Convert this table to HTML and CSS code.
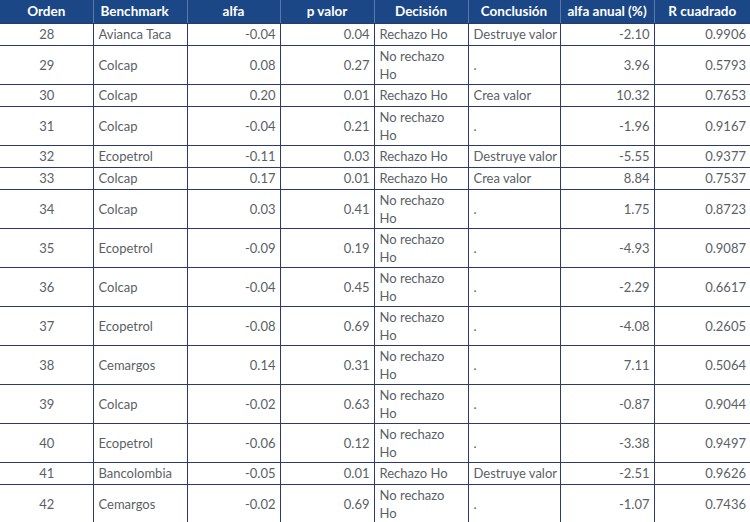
FILE: index.html
```html
<!DOCTYPE html>
<html lang="es">
<head>
<meta charset="utf-8">
<title>Tabla</title>
<link rel="stylesheet" href="styles.css">
</head>
<body>
<table class="tbl">
<colgroup>
<col class="c1"><col class="c2"><col class="c3"><col class="c4"><col class="c5"><col class="c6"><col class="c7"><col class="c8">
</colgroup>
<thead>
<tr><th>Orden</th><th class="th-left">Benchmark</th><th>alfa</th><th>p valor</th><th>Decisión</th><th>Conclusión</th><th>alfa anual (%)</th><th>R cuadrado</th></tr>
</thead>
<tbody>
<tr class="r1"><td class="c">28</td><td>Avianca Taca</td><td class="n">-0.04</td><td class="n">0.04</td><td>Rechazo Ho</td><td>Destruye valor</td><td class="n">-2.10</td><td class="n">0.9906</td></tr>
<tr class="r2"><td class="c">29</td><td>Colcap</td><td class="n">0.08</td><td class="n">0.27</td><td>No rechazo<br>Ho</td><td>.</td><td class="n">3.96</td><td class="n">0.5793</td></tr>
<tr class="r1"><td class="c">30</td><td>Colcap</td><td class="n">0.20</td><td class="n">0.01</td><td>Rechazo Ho</td><td>Crea valor</td><td class="n">10.32</td><td class="n">0.7653</td></tr>
<tr class="r2"><td class="c">31</td><td>Colcap</td><td class="n">-0.04</td><td class="n">0.21</td><td>No rechazo<br>Ho</td><td>.</td><td class="n">-1.96</td><td class="n">0.9167</td></tr>
<tr class="r1"><td class="c">32</td><td>Ecopetrol</td><td class="n">-0.11</td><td class="n">0.03</td><td>Rechazo Ho</td><td>Destruye valor</td><td class="n">-5.55</td><td class="n">0.9377</td></tr>
<tr class="r1"><td class="c">33</td><td>Colcap</td><td class="n">0.17</td><td class="n">0.01</td><td>Rechazo Ho</td><td>Crea valor</td><td class="n">8.84</td><td class="n">0.7537</td></tr>
<tr class="r2"><td class="c">34</td><td>Colcap</td><td class="n">0.03</td><td class="n">0.41</td><td>No rechazo<br>Ho</td><td>.</td><td class="n">1.75</td><td class="n">0.8723</td></tr>
<tr class="r2"><td class="c">35</td><td>Ecopetrol</td><td class="n">-0.09</td><td class="n">0.19</td><td>No rechazo<br>Ho</td><td>.</td><td class="n">-4.93</td><td class="n">0.9087</td></tr>
<tr class="r2"><td class="c">36</td><td>Colcap</td><td class="n">-0.04</td><td class="n">0.45</td><td>No rechazo<br>Ho</td><td>.</td><td class="n">-2.29</td><td class="n">0.6617</td></tr>
<tr class="r2"><td class="c">37</td><td>Ecopetrol</td><td class="n">-0.08</td><td class="n">0.69</td><td>No rechazo<br>Ho</td><td>.</td><td class="n">-4.08</td><td class="n">0.2605</td></tr>
<tr class="r2"><td class="c">38</td><td>Cemargos</td><td class="n">0.14</td><td class="n">0.31</td><td>No rechazo<br>Ho</td><td>.</td><td class="n">7.11</td><td class="n">0.5064</td></tr>
<tr class="r2"><td class="c">39</td><td>Colcap</td><td class="n">-0.02</td><td class="n">0.63</td><td>No rechazo<br>Ho</td><td>.</td><td class="n">-0.87</td><td class="n">0.9044</td></tr>
<tr class="r2"><td class="c">40</td><td>Ecopetrol</td><td class="n">-0.06</td><td class="n">0.12</td><td>No rechazo<br>Ho</td><td>.</td><td class="n">-3.38</td><td class="n">0.9497</td></tr>
<tr class="r1"><td class="c">41</td><td>Bancolombia</td><td class="n">-0.05</td><td class="n">0.01</td><td>Rechazo Ho</td><td>Destruye valor</td><td class="n">-2.51</td><td class="n">0.9626</td></tr>
<tr class="r2"><td class="c">42</td><td>Cemargos</td><td class="n">-0.02</td><td class="n">0.69</td><td>No rechazo<br>Ho</td><td>.</td><td class="n">-1.07</td><td class="n">0.7436</td></tr>
</tbody>
</table>
</body>
</html>
```
FILE: styles.css
```css
html, body {
  margin: 0;
  padding: 0;
  background: #ffffff;
}
.tbl {
  width: 750px;
  border-collapse: collapse;
  table-layout: fixed;
  font-family: Lato, "Open Sans", sans-serif;
  font-size: 13px;
  color: #5a5f66;
}
.c1 { width: 93px; }
.c2 { width: 94px; }
.c3 { width: 93px; }
.c4 { width: 94px; }
.c5 { width: 94px; }
.c6 { width: 92px; }
.c7 { width: 94px; }
.c8 { width: 96px; }
.tbl th,
.tbl td {
  box-sizing: border-box;
}
.tbl th {
  background: #1c4786;
  color: #ffffff;
  font-weight: 700;
  font-size: 13.5px;
  height: 23px;
  padding: 0 4px;
  text-align: center;
  border-right: 1px solid #5a78a8;
  border-bottom: 1px solid #2b3a66;
  line-height: 16px;
}
.tbl th.th-left {
  text-align: left;
  padding-left: 7px;
}
.tbl th:last-child,
.tbl td:last-child {
  border-right: none;
}
.tbl td {
  padding: 0 4px 0 5px;
  border-right: 1.5px solid #2b3a66;
  border-bottom: 1.5px solid #2b3a66;
  line-height: 18px;
  vertical-align: middle;
  white-space: nowrap;
}
.r1 td { height: 22px; }
.r2 td { height: 39px; }
.tbl td.c { text-align: center; }
.tbl td.n { text-align: right; }
```
